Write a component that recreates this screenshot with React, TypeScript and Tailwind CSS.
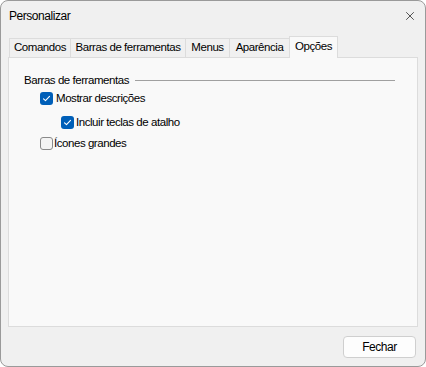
import { X } from "lucide-react";

const tabs = [
  { label: "Comandos", w: "w-[61px]" },
  { label: "Barras de ferramentas", w: "w-[115px]" },
  { label: "Menus", w: "w-[44px]" },
  { label: "Aparência", w: "w-[60px]" },
];

const Check = ({ checked }: { checked: boolean }) =>
  checked ? (
    <span className="flex h-[13px] w-[13px] shrink-0 items-center justify-center rounded-[3px] bg-[#005fb8]">
      <svg width="9" height="9" viewBox="0 0 9 9" fill="none">
        <path d="M1.5 4.8 L3.5 6.6 L7.5 2.4" stroke="white" strokeWidth="1.1" strokeLinecap="round" strokeLinejoin="round" />
      </svg>
    </span>
  ) : (
    <span className="h-[13px] w-[13px] shrink-0 rounded-[3px] border border-[#8a8a8a] bg-[#f4f4f4]" />
  );

const App = () => {
  return (
    <div className="h-[367px] w-[426px] whitespace-nowrap bg-white font-['Liberation_Sans',sans-serif] text-[11.5px] tracking-[-0.45px] text-black">
      <div className="flex h-full w-full flex-col overflow-hidden rounded-[8px] border border-[#9a9a9a] bg-[#f0f0f0]">
        <div className="flex h-[29px] items-center justify-between pl-[8px] pr-[8px]">
          <span className="text-[12px]">Personalizar</span>
          <X className="h-[14px] w-[14px] text-[#222]" strokeWidth={1.3} />
        </div>

        <div className="mx-[7px] mt-[6px] flex h-[21px] items-end">
          {tabs.map((t) => (
            <div
              key={t.label}
              className={`flex h-[19px] ${t.w} items-center justify-center border border-b-0 border-r-0 border-[#dcdcdc] bg-[#f0f0f0] first:ml-[1px]`}
            >
              {t.label}
            </div>
          ))}
          <div className="relative z-10 -mb-px flex h-[22px] w-[49px] items-start justify-center border border-b-0 border-[#dcdcdc] bg-[#f9f9f9] pt-[1px]">
            Opções
          </div>
        </div>

        <div className="mx-[7px] h-[270px] border border-[#dcdcdc] bg-[#f9f9f9] pl-[15px] pr-[22px] pt-[14px]">
          <div className="flex items-center gap-[6px]">
            <span>Barras de ferramentas</span>
            <div className="h-px flex-1 bg-[#a0a0a0]" />
          </div>
          <div className="mt-[1px] flex flex-col pl-[16px]">
            <label className="flex h-[17px] items-center gap-[3px]">
              <Check checked />
              <span>Mostrar descrições</span>
            </label>
            <label className="mt-[7px] flex h-[17px] items-center gap-[2px] pl-[21px]">
              <Check checked />
              <span>Incluir teclas de atalho</span>
            </label>
            <label className="mt-[4px] flex h-[17px] items-center gap-[1px]">
              <Check checked={false} />
              <span>Ícones grandes</span>
            </label>
          </div>
        </div>

        <div className="flex flex-1 items-center justify-end pr-[9px]">
          <button className="h-[22px] w-[73px] rounded-[4px] border border-[#cfcfcf] bg-[#fdfdfd] text-[12px]">
            Fechar
          </button>
        </div>
      </div>
    </div>
  );
};

export default App;
